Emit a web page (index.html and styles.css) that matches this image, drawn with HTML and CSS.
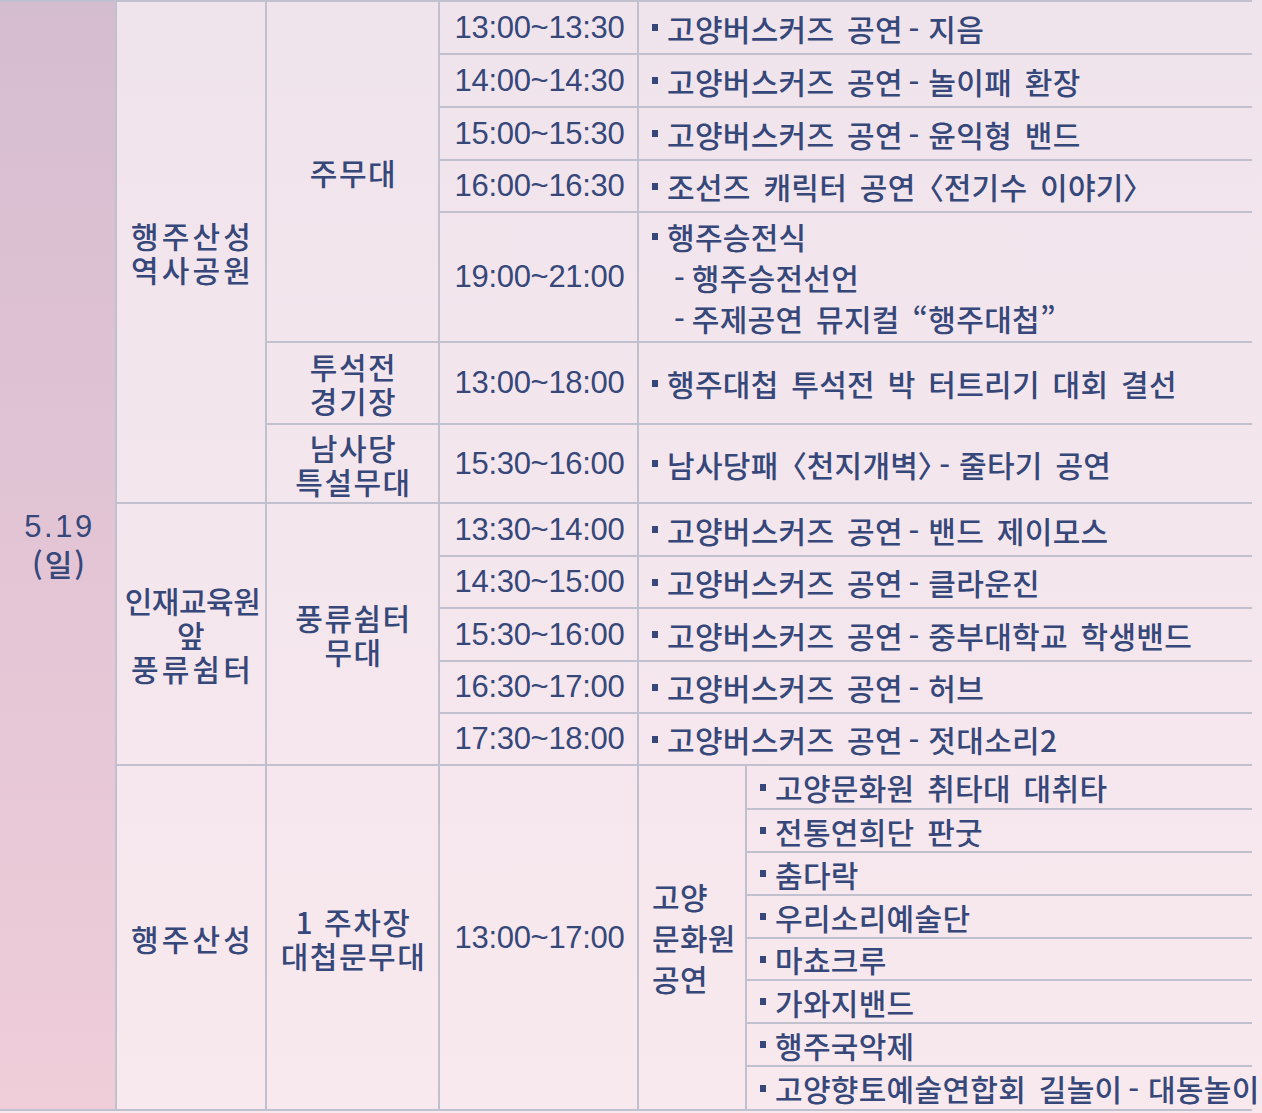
FILE: index.html
```html
<!DOCTYPE html>
<html lang="ko">
<head>
<meta charset="utf-8">
<title>행사 일정표</title>
<link rel="stylesheet" href="styles.css">
</head>
<body>
<div class="table">
  <div class="cell date span-20"><div class="date-text"><div class="num">5.19</div><div class="day">(일)</div></div></div>

  <div class="cell venue span-7">행주산성<br>역사공원</div>
  <div class="cell stage span-5">주무대</div>
  <div class="cell time">13:00~13:30</div>
  <div class="cell prog wide"><span class="bul"></span><span class="txt">고양버스커즈 공연<span class="sa"> </span>-<span class="sb"> </span>지음</span></div>
  <div class="cell time">14:00~14:30</div>
  <div class="cell prog wide"><span class="bul"></span><span class="txt">고양버스커즈 공연<span class="sa"> </span>-<span class="sb"> </span>놀이패 환장</span></div>
  <div class="cell time">15:00~15:30</div>
  <div class="cell prog wide"><span class="bul"></span><span class="txt">고양버스커즈 공연<span class="sa"> </span>-<span class="sb"> </span>윤익형 밴드</span></div>
  <div class="cell time">16:00~16:30</div>
  <div class="cell prog wide"><span class="bul"></span><span class="txt">조선즈 캐릭터 공연 <span class="br">〈</span>전기수 이야기<span class="br">〉</span></span></div>
  <div class="cell time">19:00~21:00</div>
  <div class="cell prog wide">
    <div class="lines">
      <div class="line"><span class="bul"></span><span class="txt">행주승전식</span></div>
      <div class="line sub">-<span class="sc"> </span>행주승전선언</div>
      <div class="line sub">-<span class="sc"> </span>주제공연 뮤지컬 “행주대첩”</div>
    </div>
  </div>

  <div class="cell stage two">투석전<br>경기장</div>
  <div class="cell time">13:00~18:00</div>
  <div class="cell prog wide"><span class="bul"></span><span class="txt">행주대첩 투석전 박 터트리기 대회 결선</span></div>

  <div class="cell stage two">남사당<br>특설무대</div>
  <div class="cell time">15:30~16:00</div>
  <div class="cell prog wide"><span class="bul"></span><span class="txt">남사당패 <span class="br">〈</span>천지개벽<span class="br">〉</span><span class="sa"> </span>-<span class="sb"> </span>줄타기 공연</span></div>

  <div class="cell venue span-5"><div><span class="tight">인재교육원</span><br>앞<br>풍류쉼터</div></div>
  <div class="cell stage span-5">풍류쉼터<br>무대</div>
  <div class="cell time">13:30~14:00</div>
  <div class="cell prog wide"><span class="bul"></span><span class="txt">고양버스커즈 공연<span class="sa"> </span>-<span class="sb"> </span>밴드 제이모스</span></div>
  <div class="cell time">14:30~15:00</div>
  <div class="cell prog wide"><span class="bul"></span><span class="txt">고양버스커즈 공연<span class="sa"> </span>-<span class="sb"> </span>클라운진</span></div>
  <div class="cell time">15:30~16:00</div>
  <div class="cell prog wide"><span class="bul"></span><span class="txt">고양버스커즈 공연<span class="sa"> </span>-<span class="sb"> </span>중부대학교 학생밴드</span></div>
  <div class="cell time">16:30~17:00</div>
  <div class="cell prog wide"><span class="bul"></span><span class="txt">고양버스커즈 공연<span class="sa"> </span>-<span class="sb"> </span>허브</span></div>
  <div class="cell time">17:30~18:00</div>
  <div class="cell prog wide"><span class="bul"></span><span class="txt">고양버스커즈 공연<span class="sa"> </span>-<span class="sb"> </span>젓대소리2</span></div>

  <div class="cell venue span-8">행주산성</div>
  <div class="cell stage span-8">1 주차장<br>대첩문무대</div>
  <div class="cell time span-8">13:00~17:00</div>
  <div class="cell group span-8">고양<br>문화원<br>공연</div>
  <div class="cell item"><span class="bul"></span><span class="txt">고양문화원 취타대 대취타</span></div>
  <div class="cell item"><span class="bul"></span><span class="txt">전통연희단 판굿</span></div>
  <div class="cell item"><span class="bul"></span><span class="txt">춤다락</span></div>
  <div class="cell item"><span class="bul"></span><span class="txt">우리소리예술단</span></div>
  <div class="cell item"><span class="bul"></span><span class="txt">마쵸크루</span></div>
  <div class="cell item"><span class="bul"></span><span class="txt">가와지밴드</span></div>
  <div class="cell item"><span class="bul"></span><span class="txt">행주국악제</span></div>
  <div class="cell item"><span class="bul"></span><span class="txt">고양향토예술연합회 길놀이<span class="sa"> </span>-<span class="sb"> </span>대동놀이</span></div>
</div>
</body>
</html>
```

FILE: styles.css
```css
html, body {
  margin: 0;
  padding: 0;
}

body {
  width: 1262px;
  height: 1113px;
  overflow: hidden;
  background: linear-gradient(to bottom, #f0e4ec 0, #f4e6ed 560px, #f8e9ee 1113px) fixed;
  font-family: "Noto Sans CJK KR", "Noto Sans", sans-serif;
  color: #36477a;
}

.table {
  display: grid;
  width: 1252px;
  grid-template-columns: 115px 148px 171px 197px 106px 505px;
  grid-template-rows: 51px 51px 51px 50px 128px 80px 77px 51px 50px 51px 50px 50px 42px 41px 41px 41px 40px 41px 41px 42px;
  gap: 2px;
  padding: 2px 0 2px 0;
  background: #c1c0ce;
}

.cell {
  display: flex;
  align-items: center;
  justify-content: center;
  text-align: center;
  background: linear-gradient(to bottom, #f0e4ec 0, #f4e6ed 560px, #f8e9ee 1113px) fixed;
  font-size: 30px;
  font-weight: 500;
  line-height: 34px;
  white-space: nowrap;
}

.span-20 { grid-row: span 20; }
.span-8 { grid-row: span 8; }
.span-7 { grid-row: span 7; }
.span-5 { grid-row: span 5; }
.wide { grid-column: span 2; }

.date {
  background: linear-gradient(to bottom, #d5bdd0 0, #e3c5d5 560px, #efcdd9 1113px) fixed;
  padding-bottom: 22px;
  padding-left: 4px;
}

.date-text {
  line-height: 37px;
}

.date .num {
  font-family: "Liberation Sans", Arial, sans-serif;
  font-weight: 400;
  font-size: 31px;
  letter-spacing: 2.5px;
}

.date .day {
  letter-spacing: 2px;
}

.venue {
  letter-spacing: 3.2px;
  padding-left: 3px;
}

.venue .tight {
  letter-spacing: -0.5px;
}

.stage {
  letter-spacing: 1.5px;
  padding-left: 2px;
}

.time {
  font-family: "Liberation Sans", Arial, sans-serif;
  font-weight: 400;
  font-size: 31px;
  letter-spacing: -0.3px;
  padding-left: 2px;
}

.prog,
.item {
  justify-content: flex-start;
  text-align: left;
  padding-left: 13px;
}

.txt,
.sub,
.group {
  letter-spacing: 0.3px;
  word-spacing: 4px;
}

.sa {
  word-spacing: -3px;
}

.sb {
  word-spacing: 0;
}

.sc {
  word-spacing: -2px;
}

.br {
  font-feature-settings: "palt" 1;
}

.group {
  justify-content: flex-start;
  text-align: left;
  padding-left: 13px;
  line-height: 41px;
}

.lines {
  line-height: 41px;
}

.line {
  display: flex;
  align-items: center;
}

.sub {
  display: block;
  padding-left: 22px;
}

.bul {
  display: inline-block;
  width: 6px;
  height: 7px;
  background: #36477a;
  margin-right: 9px;
  flex: none;
}
```
